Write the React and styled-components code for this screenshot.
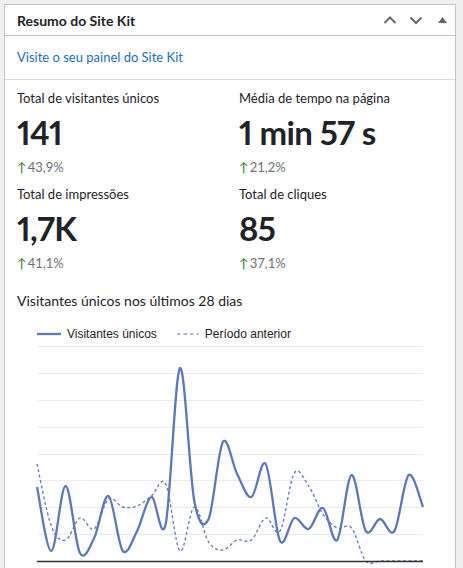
import React from 'react';
import styled, { createGlobalStyle } from 'styled-components';

const GlobalStyle = createGlobalStyle`
    body {
        margin: 0;
        background: #f0f0f1;
        font-family: Lato, "Noto Sans", sans-serif;
        color: #1d2327;
    }
`;

const Panel = styled.div`
    margin: 4px 0 0 4px;
    width: 452px;
    box-sizing: border-box;
    background: #fff;
    border: 1px solid #c3c4c7;
    min-height: 600px;
`;

const Header = styled.div`
    display: flex;
    align-items: center;
    justify-content: space-between;
    height: 30px;
    padding-left: 12px;
    border-bottom: 1px solid #c3c4c7;
`;

const Title = styled.h2`
    margin: 0;
    font-size: 14px;
    font-weight: 700;
    color: #1d2327;
`;

const Controls = styled.div`
    display: flex;
    height: 100%;
`;

const HandleButton = styled.button`
    width: 26px;
    height: 100%;
    padding: 0;
    border: none;
    background: none;
    display: flex;
    align-items: center;
    justify-content: center;
    color: #646970;
    cursor: pointer;
`;

const LinkRow = styled.div`
    padding: 9px 12px 11px;
    line-height: 22px;
    border-bottom: 1px solid #dcdcde;
`;

const DashLink = styled.a`
    font-size: 13px;
    color: #2271b1;
    text-decoration: none;
`;

const Body = styled.div`
    padding: 8px 12px 0;
`;

const StatsGrid = styled.div`
    display: grid;
    grid-template-columns: 1fr 1fr;
    column-gap: 18px;
    row-gap: 8px;
`;

const Stat = styled.div`
    display: flex;
    flex-direction: column;
`;

const StatLabel = styled.div`
    font-size: 13px;
    line-height: 20px;
    color: #1d2327;
`;

const StatValue = styled.div`
    margin-top: 4px;
    font-size: 33px;
    font-weight: 700;
    line-height: 40px;
    letter-spacing: -0.6px;
    font-variant-numeric: proportional-nums;
    color: #1d2327;
`;

const Change = styled.div`
    margin-top: 6px;
    display: flex;
    align-items: center;
    gap: 1px;
    font-size: 13px;
    line-height: 18px;
    color: #6c7075;
`;

const UpArrow = styled.span`
    color: #3b7a2b;
    font-size: 13px;
`;

const ChartTitle = styled.div`
    margin-top: 19px;
    font-size: 14px;
    line-height: 20px;
    color: #1d2327;
`;

const Legend = styled.div`
    margin: 15px 0 0 20px;
    display: flex;
    align-items: center;
    gap: 20px;
    font-family: "Liberation Sans", Arial, sans-serif;
    font-size: 12px;
    line-height: 16px;
    color: #222;
`;

const LegendItem = styled.div`
    display: flex;
    align-items: center;
    gap: 6px;
`;

const ChartBox = styled.div`
    margin: 3px 0 0 19px;
`;

const BLUE = '#5b79b8';

const current = [486, 550, 485, 552, 537, 495, 550, 530, 496, 523, 367, 500, 518, 441, 473, 496, 463, 540, 517, 528, 507, 539, 474, 530, 518, 530, 474, 506];
const previous = [463, 525, 539, 517, 528, 498, 506, 505, 495, 483, 550, 506, 541, 549, 539, 539, 517, 530, 472, 485, 513, 527, 527, 560, 560, 560, 560, 560];

const X0 = 37;
const STEP = 386 / 27;
const OX = 36;
const OY = 344;

const smoothPath = (values) => {
    const pts = values.map((v, i) => [X0 + i * STEP - OX, v - OY]);
    let d = `M${pts[0][0].toFixed(1)},${pts[0][1].toFixed(1)}`;
    for (let i = 0; i < pts.length - 1; i++) {
        const p0 = pts[i - 1] || pts[i];
        const p1 = pts[i];
        const p2 = pts[i + 1];
        const p3 = pts[i + 2] || p2;
        const c1x = p1[0] + (p2[0] - p0[0]) / 6;
        const c1y = p1[1] + (p2[1] - p0[1]) / 6;
        const c2x = p2[0] - (p3[0] - p1[0]) / 6;
        const c2y = p2[1] - (p3[1] - p1[1]) / 6;
        d += ` C${c1x.toFixed(1)},${c1y.toFixed(1)} ${c2x.toFixed(1)},${c2y.toFixed(1)} ${p2[0].toFixed(1)},${p2[1].toFixed(1)}`;
    }
    return d;
};

const grid = [345, 372, 399, 426, 453, 479, 506, 533];

const stats = [
    { label: 'Total de visitantes únicos', value: '141', change: '43,9%' },
    { label: 'Média de tempo na página', value: '1 min 57 s', change: '21,2%' },
    { label: 'Total de impressões', value: '1,7K', change: '41,1%' },
    { label: 'Total de cliques', value: '85', change: '37,1%' },
];

const Chevron = ({ up }) => (
    <svg width="14" height="10" viewBox="0 0 14 10">
        <path d={up ? 'M1.5 8 L7 2.5 L12.5 8' : 'M1.5 2.5 L7 8 L12.5 2.5'} fill="none" stroke="currentColor" strokeWidth="2" />
    </svg>
);

const Triangle = () => (
    <svg width="9" height="6" viewBox="0 0 9 6">
        <path d="M0 6 L4.5 0 L9 6 Z" fill="currentColor" />
    </svg>
);

const Chart = () => (
    <svg width="392" height="222" viewBox="0 0 392 222">
        {grid.map((y) => (
            <line key={y} x1={X0 - OX} x2={423 - OX} y1={y - OY + 0.5} y2={y - OY + 0.5} stroke="#ebebeb" strokeWidth="1" />
        ))}
        <path d={smoothPath(previous)} fill="none" stroke={BLUE} strokeWidth="1.3" strokeDasharray="3 2.5" />
        <path d={smoothPath(current)} fill="none" stroke={BLUE} strokeWidth="2.3" />
        <line x1={X0 - OX} x2={423 - OX} y1={560 - OY + 0.5} y2={560 - OY + 0.5} stroke="#333" strokeWidth="1.3" />
    </svg>
);

const App = () => {
    return (
        <>
            <GlobalStyle />
            <Panel>
                <Header>
                    <Title>Resumo do Site Kit</Title>
                    <Controls>
                        <HandleButton aria-label="Mover para cima"><Chevron up /></HandleButton>
                        <HandleButton aria-label="Mover para baixo"><Chevron /></HandleButton>
                        <HandleButton aria-label="Alternar painel"><Triangle /></HandleButton>
                    </Controls>
                </Header>
                <LinkRow>
                    <DashLink href="#">Visite o seu painel do Site Kit</DashLink>
                </LinkRow>
                <Body>
                    <StatsGrid>
                        {stats.map((s) => (
                            <Stat key={s.label}>
                                <StatLabel>{s.label}</StatLabel>
                                <StatValue>{s.value}</StatValue>
                                <Change><UpArrow>↑</UpArrow>{s.change}</Change>
                            </Stat>
                        ))}
                    </StatsGrid>
                    <ChartTitle>Visitantes únicos nos últimos 28 dias</ChartTitle>
                    <Legend>
                        <LegendItem>
                            <svg width="24" height="4"><line x1="0" x2="24" y1="2" y2="2" stroke={BLUE} strokeWidth="2.3" /></svg>
                            Visitantes únicos
                        </LegendItem>
                        <LegendItem>
                            <svg width="22" height="4"><line x1="0" x2="22" y1="2" y2="2" stroke="#a9b7d6" strokeWidth="2" strokeDasharray="3.5 3" /></svg>
                            Período anterior
                        </LegendItem>
                    </Legend>
                    <ChartBox>
                        <Chart />
                    </ChartBox>
                </Body>
            </Panel>
        </>
    );
};

export default App;
